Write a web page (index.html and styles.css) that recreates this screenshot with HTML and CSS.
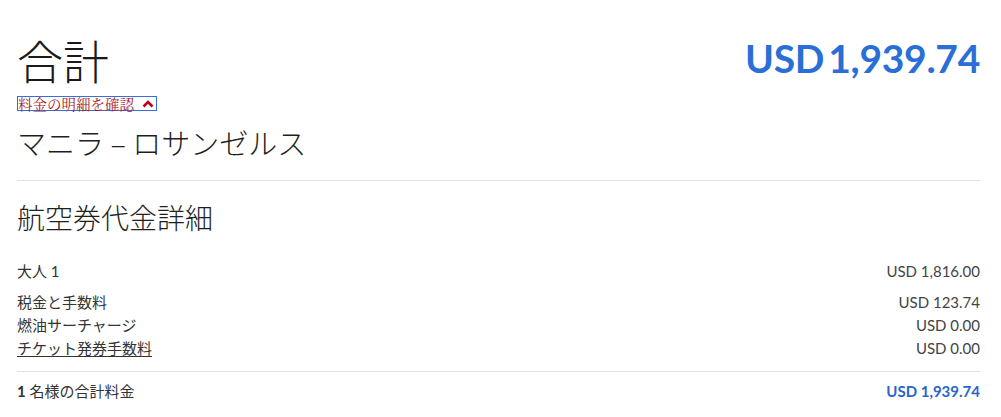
FILE: index.html
```html
<!DOCTYPE html>
<html lang="ja">
<head>
<meta charset="utf-8">
<link rel="stylesheet" href="styles.css">
</head>
<body>
<div class="page">
  <div class="top">
    <div class="top-left">
      <h1 class="title">合計</h1>
      <a class="detail-link" href="#">料金の明細を確認<svg class="chev" width="12" height="8" viewBox="0 0 12 8"><path d="M1.5 6.5 L6 2 L10.5 6.5" fill="none" stroke="#c0001a" stroke-width="2.6"/></svg></a>
    </div>
    <div class="grand">USD 1,939.74</div>
  </div>
  <div class="route">マニラ – ロサンゼルス</div>
  <hr class="sep">
  <h2 class="section">航空券代金詳細</h2>
  <div class="row adult"><span>大人 1</span><span class="amt">USD 1,816.00</span></div>
  <div class="group">
    <div class="row"><span>税金と手数料</span><span class="amt">USD 123.74</span></div>
    <div class="row"><span>燃油サーチャージ</span><span class="amt">USD 0.00</span></div>
    <div class="row"><span class="ul">チケット発券手数料</span><span class="amt">USD 0.00</span></div>
  </div>
  <hr class="sep sep2">
  <div class="row total"><span><b>1</b> 名様の合計料金</span><span class="amt blue">USD 1,939.74</span></div>
</div>
</body>
</html>
```
FILE: styles.css
```css
html, body { margin: 0; padding: 0; background: #fff; }
body { font-family: "Lato", "Noto Sans CJK JP", sans-serif; color: #222; }
.page { padding: 0 21px 0 17px; }
.top { display: flex; justify-content: space-between; align-items: flex-start; padding-top: 30px; }
.top-left { display: flex; flex-direction: column; align-items: flex-start; }
.title { margin: 0; font-weight: 300; font-size: 46px; line-height: 58px; color: #1a1a1a; font-family: "Noto Sans CJK JP", sans-serif; }
.detail-link { display: inline-flex; align-items: center; gap: 8px; margin-top: 8px; padding: 0 2px 0 0; border: 1px solid #3a6fd8; color: #a8182a; text-decoration: none; font-family: "Noto Serif CJK JP", "Noto Sans CJK JP", serif; font-size: 14.5px; line-height: 13px; height: 13px; }
.chev { display: block; }
.grand { font-weight: 700; font-size: 39px; line-height: 1; color: #2a6fd6; margin-top: 9px; word-spacing: -5px; letter-spacing: -0.3px; }
.route { font-family: "Noto Sans CJK JP", sans-serif; font-weight: 300; font-size: 29px; line-height: 40px; margin-top: 11px; color: #1f1f1f; }
.sep { border: 0; border-top: 1px solid #e2e2e2; margin: 18px 0 0; }
.section { margin: 17px 0 0; font-weight: 300; font-size: 28px; line-height: 38px; font-family: "Noto Sans CJK JP", sans-serif; color: #1f1f1f; }
.row { display: flex; justify-content: space-between; font-size: 15px; line-height: 23px; color: #333; }
.adult { margin-top: 24px; }
.group { margin-top: 8px; }
.amt { color: #444; }
.ul { text-decoration: underline; text-underline-offset: 2px; }
.sep2 { margin-top: 11px; }
.total { margin-top: 8px; }
.blue { color: #2a66c8; font-weight: 700; }
```
